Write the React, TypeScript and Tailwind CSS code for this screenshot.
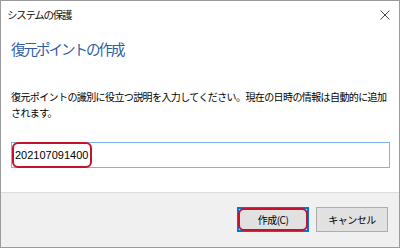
import React from "react";

const jp = "font-['Noto_Sans_CJK_JP',sans-serif]";

export default function App() {
  return (
    <div
      className={`w-[400px] h-[248px] bg-white border border-[#9a9a9a] flex flex-col text-black ${jp}`}
    >
      {/* title bar */}
      <div className="h-[28px] flex items-center justify-between pl-[6px] pr-[9px]">
        <span className="text-[10.5px] tracking-[-1.3px] text-[#111]">システムの保護</span>
        <svg width="10" height="10" viewBox="0 0 10 10" className="mt-[-1px]">
          <path d="M0.5 0.5 L9.5 9.5 M9.5 0.5 L0.5 9.5" stroke="#444" strokeWidth="1" />
        </svg>
      </div>

      {/* body */}
      <div className="pl-[10px] pr-[9px]">
        <h1 className="mt-[10px] h-[20px] leading-[20px] text-[14.5px] tracking-[-2px] text-[#2d5caa] font-normal">
          復元ポイントの作成
        </h1>
        <p className="mt-[30px] text-[10px] leading-[16px] tracking-[-0.6px]">
          復元ポイントの識別に役立つ説明を入力してください。現在の日時の情報は自動的に追加
          <br />
          されます。
        </p>
        <div className="relative mt-[21px] h-[26px] w-[379px] border border-[#7eb4ea] flex items-center pl-[3px]">
          <span className="font-['Liberation_Sans',sans-serif] text-[11px]">202107091400</span>
          <div className="absolute left-[0px] top-[-1px] w-[80px] h-[26px] rounded-[6px] border-2 border-[#c4122f]" />
        </div>
      </div>

      {/* footer */}
      <div className="mt-auto h-[55px] bg-[#f0f0f0] border-t border-[#dcdcdc] flex justify-end items-start pt-[14px] pr-[11px] gap-[7px]">
        <button className="relative w-[72px] h-[25px] bg-[#e1e1e1] border-2 border-[#0078d7] text-[10px] tracking-[-0.5px] flex items-center justify-center">
          作成(C)
          <div className="absolute inset-[-1px] rounded-[6px] border-2 border-[#c4122f]" />
        </button>
        <button className="w-[72px] h-[25px] bg-[#e1e1e1] border border-[#adadad] text-[10px] tracking-[-0.5px] flex items-center justify-center">
          キャンセル
        </button>
      </div>
    </div>
  );
}
